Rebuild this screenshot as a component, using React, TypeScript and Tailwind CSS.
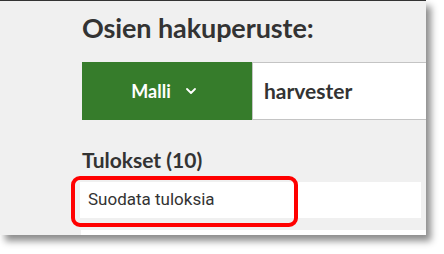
import React from 'react';
import { ChevronDown } from 'lucide-react';

export default function App() {
  return (
    <div className="w-[444px] h-[254px] bg-white overflow-hidden">
      {/* Panel */}
      <div className="relative w-[426px] h-[235px] bg-[#f0f0f0] border-t border-[#333] shadow-[5px_6px_7px_rgba(0,0,0,0.45)] overflow-hidden pl-[82px] font-['Lato',sans-serif] text-[#333]">
        <h1 className="pt-[11px] text-[27px] leading-[32px] font-bold tracking-[-0.1px]">Osien hakuperuste:</h1>

        {/* Search row */}
        <div className="flex mt-[18px] h-[58px]">
          <button className="w-[170px] flex items-center justify-center gap-[12px] pr-[4px] bg-[#367c2b] text-white text-[18px] font-bold">
            <span>Malli</span>
            <ChevronDown size={16} strokeWidth={2.75} />
          </button>
          <div className="flex-1 flex items-center bg-white border-y border-l border-[#c4c4c4] pl-[11px] text-[21px] font-bold">
            harvester
          </div>
        </div>

        <h2 className="mt-[27px] text-[21px] leading-[26px] font-bold">Tulokset (10)</h2>

        {/* Filter */}
        <div className="mt-[9px] ml-[-2px] w-[341px] h-[36px] bg-white flex items-center pl-[8px] font-['Roboto',sans-serif] text-[17px] text-[#333]">
          Suodata tuloksia
        </div>
        <div className="mt-[12px] ml-[-1px] h-[10px] bg-white" />

        {/* Annotation highlight */}
        <div className="absolute left-[71px] top-[175px] w-[227px] h-[51px] border-[4px] border-[#ff0000] rounded-[9px]" />
      </div>
    </div>
  );
}
